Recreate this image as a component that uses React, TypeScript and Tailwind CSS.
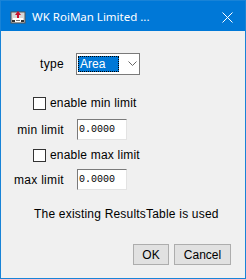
import React from "react";

function TitleIcon() {
  return (
    <svg width="16" height="16" viewBox="0 0 16 16">
      <rect x="1" y="3" width="14" height="11" fill="#d8d8d8" stroke="#555" strokeWidth="1" />
      <rect x="3" y="9" width="10" height="4" fill="#ffffff" />
      <path d="M5 6 L8 2 L11 6 L9 6 L9 9 L7 9 L7 6 Z" fill="#c8102e" />
      <rect x="2" y="11" width="3" height="2" fill="#333" />
      <rect x="11" y="11" width="3" height="2" fill="#333" />
      <rect x="6" y="11" width="4" height="1" fill="#777" />
    </svg>
  );
}

function Checkbox({ label }: { label: string }) {
  return (
    <div className="flex items-center h-[16px] pl-[32px]">
      <div className="w-[13px] h-[13px] border border-[#333333] bg-white" />
      <span className="ml-[4px] text-[12px] tracking-[0.2px] text-black">{label}</span>
    </div>
  );
}

function FieldRow({ label }: { label: string }) {
  return (
    <div className="flex items-center h-[21px]">
      <div className="w-[63px] text-right text-[12px] tracking-[0.3px] text-black">{label}</div>
      <div className="ml-[13px] w-[50px] h-[21px] bg-white border-t border-l border-t-[#7a7a7a] border-l-[#7a7a7a] border-b border-r border-b-[#e3e3e3] border-r-[#e3e3e3] flex items-center pl-[1px]">
        <span className="text-[10px] text-black" style={{ fontFamily: '"Liberation Mono", monospace' }}>
          0.0000
        </span>
      </div>
    </div>
  );
}

export default function App() {
  return (
    <div
      className="w-[246px] h-[279px] bg-[#f0f0f0] border border-[#1883d7] flex flex-col overflow-hidden"
      style={{ fontFamily: '"Liberation Sans", Arial, sans-serif' }}
    >
      <div className="h-[30px] bg-[#0078d7] flex items-center shrink-0">
        <div className="ml-[9px] mt-[1px]">
          <TitleIcon />
        </div>
        <span
          className="ml-[6px] text-white text-[11.5px] mt-[1px]"
          style={{ fontFamily: '"Noto Sans", "Open Sans", sans-serif' }}
        >
          WK RoiMan Limited ...
        </span>
        <div className="ml-auto mr-[12px] mt-[2px]">
          <svg width="11" height="11" viewBox="0 0 11 11">
            <path d="M0.5 0.5 L10.5 10.5 M10.5 0.5 L0.5 10.5" stroke="#ffffff" strokeWidth="1" />
          </svg>
        </div>
      </div>

      <div className="flex items-center h-[23px] mt-[21px]">
        <div className="w-[63px] text-right text-[12px] tracking-[0.3px] text-black">type</div>
        <div className="ml-[12px] w-[64px] h-[22px] bg-white border border-[#7a7a7a] flex items-center pl-[1px]">
          <div className="h-[16px] w-[41px] bg-[#0078d7] border border-dotted border-black flex items-center">
            <span className="text-white text-[12px] ml-[1px]">Area</span>
          </div>
          <svg className="ml-[9px]" width="9" height="6" viewBox="0 0 9 6">
            <path d="M0.5 0.5 L4.5 4.5 L8.5 0.5" stroke="#666" strokeWidth="1" fill="none" />
          </svg>
        </div>
      </div>

      <div className="mt-[20px]">
        <Checkbox label="enable min limit" />
      </div>
      <div className="mt-[8px]">
        <FieldRow label="min limit" />
      </div>
      <div className="mt-[7px]">
        <Checkbox label="enable max limit" />
      </div>
      <div className="mt-[6px]">
        <FieldRow label="max limit" />
      </div>

      <div className="mt-[17px] h-[14px] flex items-center pl-[33px] text-[12px] tracking-[0.2px] text-black">
        The existing ResultsTable is used
      </div>

      <div className="mt-[23px] flex justify-end pr-[14px] gap-[5px]">
        <button className="w-[36px] h-[21px] bg-[#e1e1e1] border border-[#adadad] text-[12px] text-black">
          OK
        </button>
        <button className="w-[57px] h-[21px] bg-[#e1e1e1] border border-[#adadad] text-[12px] text-black">
          Cancel
        </button>
      </div>
    </div>
  );
}
